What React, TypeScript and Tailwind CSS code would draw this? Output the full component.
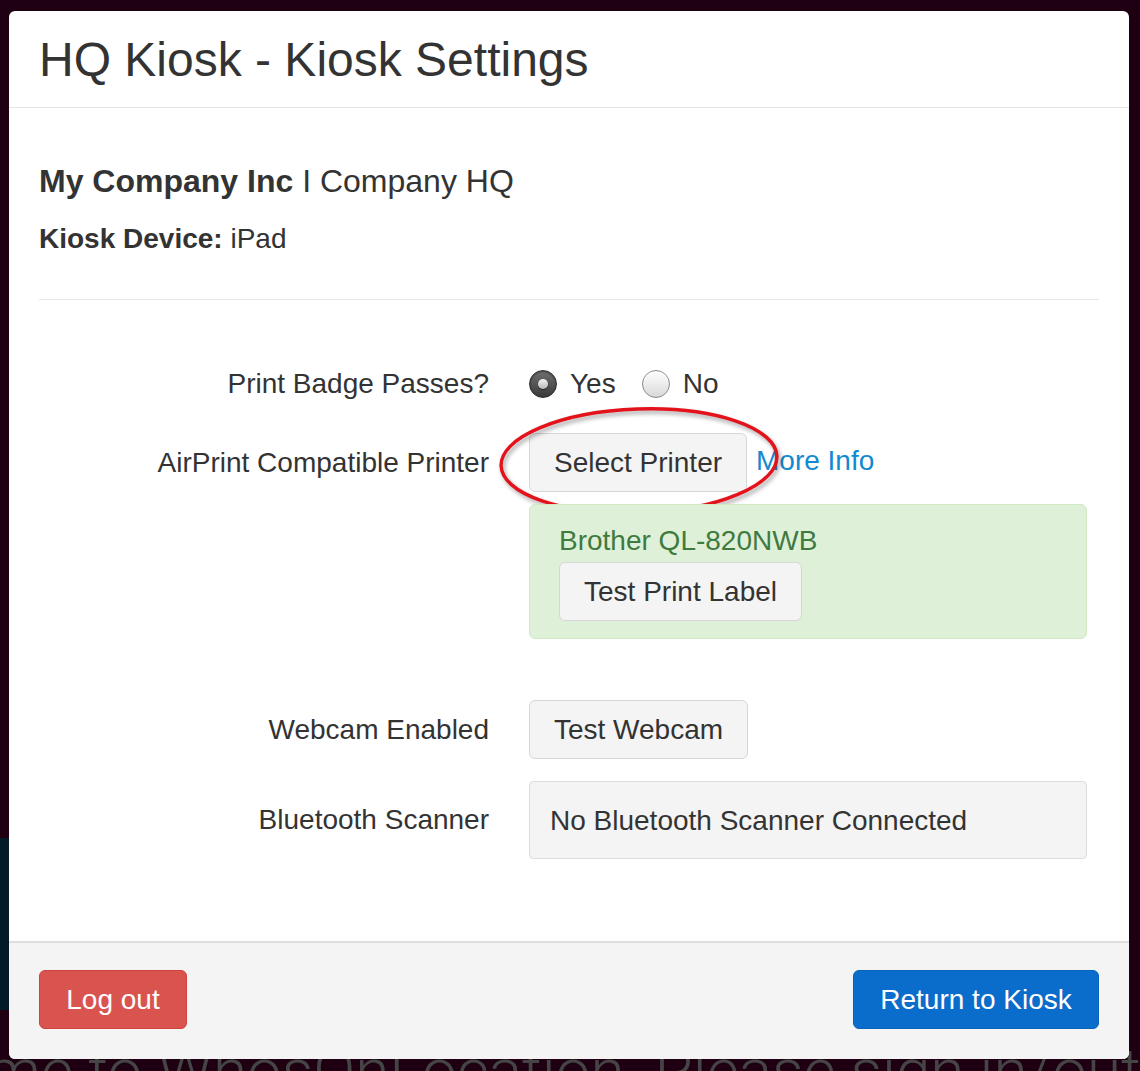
import type { ReactNode } from "react";

function Row({ label, children, className = "" }: { label?: string; children: ReactNode; className?: string }) {
  return (
    <div className={`flex items-center gap-x-[40px] ${className}`}>
      <div className="w-[450px] shrink-0 text-right">{label}</div>
      <div className="relative flex w-[558px] items-center">{children}</div>
    </div>
  );
}

function GrayButton({ children, className = "" }: { children: ReactNode; className?: string }) {
  return (
    <button
      type="button"
      className={`flex h-[59px] items-center justify-center rounded-[6px] border border-[#d6d6d6] bg-[#f4f4f4] text-[#333] ${className}`}
    >
      {children}
    </button>
  );
}

function Radio({ checked }: { checked?: boolean }) {
  return checked ? (
    <span className="flex h-[28px] w-[28px] shrink-0 items-center justify-center rounded-full border border-[#2f2f2f] bg-gradient-to-b from-[#707070] to-[#3b3b3b] shadow-[inset_0_1px_2px_rgba(0,0,0,0.4)]">
      <span className="block h-[10px] w-[10px] rounded-full bg-gradient-to-b from-[#f2f2f2] to-[#b9b9b9] shadow-[0_1px_1px_rgba(0,0,0,0.5)]" />
    </span>
  ) : (
    <span className="block h-[28px] w-[28px] shrink-0 rounded-full border border-[#8a8a8a] bg-gradient-to-b from-[#ffffff] to-[#d9d9d9] shadow-[inset_0_1px_1px_rgba(255,255,255,0.9)]" />
  );
}

export default function App() {
  return (
    <div className="relative h-[1071px] w-[1140px] overflow-hidden bg-[#1f0012] font-['Liberation_Sans',Arial,sans-serif] text-[28px] leading-[32px] text-[#333]">
      {/* page behind the dialog */}
      <div className="absolute left-0 top-[838px] h-[172px] w-[9px] bg-[#031b27]" />
      <div className="absolute left-[-14px] top-[1036px] whitespace-nowrap font-['Roboto',sans-serif] text-[62px] font-light leading-[70px] text-[#454545]">
        me to WhosOnLocation. Please sign in/out at
      </div>

      <div className="relative z-10 ml-[9px] mt-[11px] w-[1120px] overflow-hidden rounded-[6px] bg-white">
        <div className="border-b border-[#e5e5e5] px-[30px] pb-[21px] pt-[23px]">
          <h1 className="text-[48px] leading-[52px]">HQ Kiosk - Kiosk Settings</h1>
        </div>

        <div className="px-[30px] pb-[82px] pt-[55px]">
          <p className="text-[32px] leading-[36px]">
            <span className="font-bold">My Company Inc</span> I Company HQ
          </p>
          <p className="mt-[24px]">
            <span className="font-bold">Kiosk Device:</span> iPad
          </p>
          <div className="mt-[44px] h-px bg-[#e8e8e8]" />

          <Row label="Print Badge Passes?" className="mt-[60px] h-[48px]">
            <Radio checked />
            <span className="ml-[13px]">Yes</span>
            <span className="ml-[26px]">
              <Radio />
            </span>
            <span className="ml-[13px]">No</span>
          </Row>

          <Row label="AirPrint Compatible Printer" className="mt-[25px]">
            <GrayButton className="w-[218px]">Select Printer</GrayButton>
            <a className="ml-[9px] -translate-y-[2px] text-[#1389d0]">More Info</a>
            <svg
              className="pointer-events-none absolute left-[-32px] top-[-27px] h-[112px] w-[284px] drop-shadow-[2px_3px_2px_rgba(0,0,0,0.35)]"
              viewBox="0 0 284 112"
              fill="none"
            >
              <ellipse cx="142" cy="55" rx="138" ry="52" transform="rotate(-2 142 55)" stroke="#e3121b" strokeWidth="3.4" />
            </svg>
          </Row>

          <Row className="mt-[12px]">
            <div className="w-full rounded-[6px] border border-[#d3e8c4] bg-[#dff0d8] pb-[17px] pl-[29px] pt-[20px]">
              <p className="text-[#3f7a3f]">Brother QL-820NWB</p>
              <GrayButton className="mt-[5px] w-[243px]">Test Print Label</GrayButton>
            </div>
          </Row>

          <Row label="Webcam Enabled" className="mt-[61px]">
            <GrayButton className="w-[219px]">Test Webcam</GrayButton>
          </Row>

          <Row label="Bluetooth Scanner" className="mt-[22px]">
            <div className="flex h-[78px] w-full items-center rounded-[4px] border border-[#dcdcdc] bg-[#f4f4f4] pl-[20px] pt-[2px]">
              No Bluetooth Scanner Connected
            </div>
          </Row>
        </div>

        <div className="flex items-center justify-between border-t-2 border-[#dedede] bg-[#f4f4f4] pb-[30px] pl-[30px] pr-[30px] pt-[27px]">
          <button
            type="button"
            className="flex h-[59px] w-[148px] items-center justify-center rounded-[6px] border border-[#cf433f] bg-[#d9534f] text-white"
          >
            Log out
          </button>
          <button
            type="button"
            className="flex h-[59px] w-[246px] items-center justify-center rounded-[6px] border border-[#0a63b8] bg-[#0a6dcb] text-white"
          >
            Return to Kiosk
          </button>
        </div>
      </div>
    </div>
  );
}
